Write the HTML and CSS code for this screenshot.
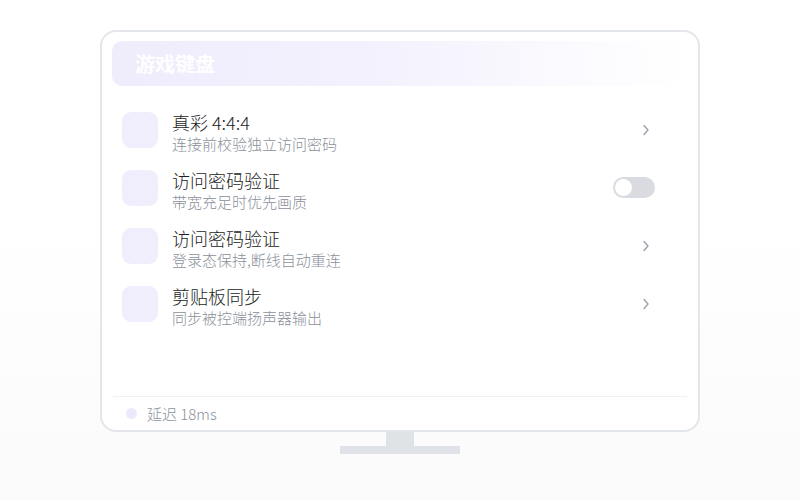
FILE: index.html
```html
<!DOCTYPE html>
<html lang="zh">
<head>
<meta charset="utf-8">
<title>游戏键盘</title>
<link rel="stylesheet" href="styles.css">
</head>
<body>
<div class="scene">
  <div class="monitor">
    <div class="header">游戏键盘</div>
    <div class="list">
      <div class="row">
        <div class="icon"></div>
        <div class="text">
          <div class="title">真彩 4:4:4</div>
          <div class="sub">连接前校验独立访问密码</div>
        </div>
        <svg class="chev" width="8" height="12" viewBox="0 0 8 12"><polyline points="2,1.5 6,6 2,10.5" fill="none" stroke="#9ca1ab" stroke-width="1.4" stroke-linecap="round" stroke-linejoin="round"/></svg>
      </div>
      <div class="row">
        <div class="icon"></div>
        <div class="text">
          <div class="title">访问密码验证</div>
          <div class="sub">带宽充足时优先画质</div>
        </div>
        <div class="toggle"><div class="knob"></div></div>
      </div>
      <div class="row">
        <div class="icon"></div>
        <div class="text">
          <div class="title">访问密码验证</div>
          <div class="sub">登录态保持,断线自动重连</div>
        </div>
        <svg class="chev" width="8" height="12" viewBox="0 0 8 12"><polyline points="2,1.5 6,6 2,10.5" fill="none" stroke="#9ca1ab" stroke-width="1.4" stroke-linecap="round" stroke-linejoin="round"/></svg>
      </div>
      <div class="row">
        <div class="icon"></div>
        <div class="text">
          <div class="title">剪贴板同步</div>
          <div class="sub">同步被控端扬声器输出</div>
        </div>
        <svg class="chev" width="8" height="12" viewBox="0 0 8 12"><polyline points="2,1.5 6,6 2,10.5" fill="none" stroke="#9ca1ab" stroke-width="1.4" stroke-linecap="round" stroke-linejoin="round"/></svg>
      </div>
    </div>
    <div class="footer">
      <span class="dot"></span>
      <span class="latency">延迟 18ms</span>
    </div>
  </div>
  <div class="neck"></div>
  <div class="base"></div>
</div>
</body>
</html>
```
FILE: styles.css
```css
html, body {
  margin: 0;
  height: 100%;
}
body {
  background: linear-gradient(180deg, #ffffff 0%, #ffffff 45%, #fafafa 100%);
  font-family: "Noto Sans CJK SC", "Noto Sans", sans-serif;
}
.scene {
  padding-top: 30px;
  display: flex;
  flex-direction: column;
  align-items: center;
}
.monitor {
  box-sizing: border-box;
  width: 600px;
  height: 402px;
  border: 2px solid #e3e6ea;
  border-radius: 16px;
  background: #ffffff;
  padding: 9px 10px 0;
  display: flex;
  flex-direction: column;
}
.header {
  height: 45px;
  border-radius: 10px;
  background: linear-gradient(90deg, #efedfc 0%, #f3f1fd 45%, rgba(248, 247, 254, 0.6) 80%, rgba(255, 255, 255, 0) 100%);
  color: #ffffff;
  font-weight: 700;
  font-size: 20px;
  line-height: 45px;
  padding-left: 23px;
}
.list {
  margin-top: 15px;
  padding: 0 10px;
}
.row {
  height: 58px;
  display: flex;
  align-items: center;
  padding-right: 23px;
}
.icon {
  width: 36px;
  height: 36px;
  border-radius: 9px;
  background: #f0eefc;
  flex: none;
}
.text {
  flex: 1;
  margin-left: 14px;
  display: flex;
  flex-direction: column;
  margin-top: 4px;
}
.title {
  font-size: 18px;
  line-height: 24px;
  font-weight: 300;
  color: #1c1e22;
}
.sub {
  font-size: 15px;
  line-height: 20px;
  font-weight: 300;
  color: #8b909a;
}
.chev {
  margin-right: 5px;
}
.toggle {
  width: 42px;
  height: 21px;
  border-radius: 11px;
  background: #d9dbe1;
  position: relative;
  margin-top: -2px;
}
.knob {
  position: absolute;
  left: 2px;
  top: 2px;
  width: 17px;
  height: 17px;
  border-radius: 50%;
  background: #ffffff;
}
.footer {
  margin-top: auto;
  height: 33px;
  border-top: 1px solid #eef0f3;
  margin-left: 1px;
  margin-right: 1px;
  display: flex;
  align-items: center;
  padding-left: 13px;
}
.dot {
  width: 11px;
  height: 11px;
  border-radius: 50%;
  background: #ece9fc;
}
.latency {
  margin-left: 10px;
  font-size: 15px;
  font-weight: 300;
  color: #8b909a;
}
.neck {
  width: 28px;
  height: 14px;
  background: #dfe2e6;
}
.base {
  width: 120px;
  height: 8px;
  background: #dfe2e6;
}
```
